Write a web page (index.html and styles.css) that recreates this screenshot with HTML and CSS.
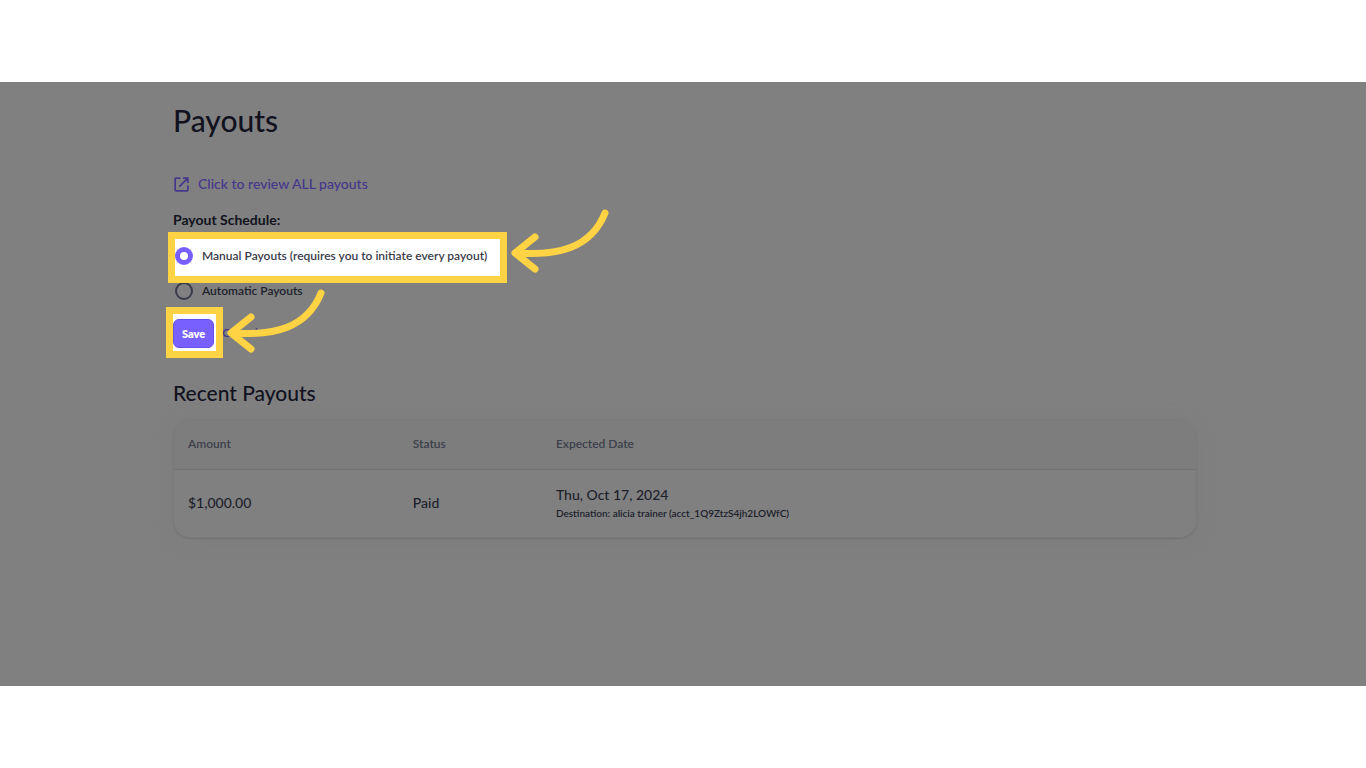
FILE: index.html
```html
<!DOCTYPE html>
<html lang="en">
<head>
<meta charset="utf-8">
<meta name="viewport" content="width=device-width, initial-scale=1">
<title>Payouts</title>
<link rel="stylesheet" href="styles.css">
</head>
<body>
<main class="stage">
  <div class="content">
    <h1 class="title">Payouts</h1>
    <a class="review-link" href="#all">
      <svg class="link-icon" viewBox="0 0 16 16" aria-hidden="true"><path d="M7 2H2.8A.8.8 0 0 0 2 2.800V13.200A.8.8 0 0 0 2.800 14H13.200A.8.8 0 0 0 14 13.200V9M9.500 2H14V6.500M14 2L6 10"/></svg>
      Click to review ALL payouts
    </a>
    <form class="schedule">
      <fieldset class="options">
        <legend class="legend">Payout Schedule:</legend>
        <div class="callout">
          <label class="option highlight"><input class="radio" type="radio" name="schedule" checked>Manual Payouts (requires you to initiate every payout)</label>
          <svg class="arrow" viewBox="0 0 100 68" aria-hidden="true"><path d="M96 8C82 43 49 51 8 48M26 32L6 48L26 64"/></svg>
        </div>
        <label class="option"><input class="radio" type="radio" name="schedule">Automatic Payouts</label>
      </fieldset>
      <div class="actions">
        <div class="callout">
          <div class="save-frame highlight"><button class="save" type="button">Save</button></div>
          <svg class="arrow arrow-low" viewBox="0 0 100 68" aria-hidden="true"><path d="M96 8C82 43 49 51 8 48M26 32L6 48L26 64"/></svg>
        </div>
        <a class="cancel" href="#cancel">Cancel</a>
      </div>
    </form>
    <h2 class="subtitle">Recent Payouts</h2>
    <div class="card">
      <table class="payouts">
        <thead>
          <tr><th class="col-amount">Amount</th><th class="col-status">Status</th><th>Expected Date</th></tr>
        </thead>
        <tbody>
          <tr>
            <td>$1,000.00</td>
            <td>Paid</td>
            <td>Thu, Oct 17, 2024<div class="destination">Destination: alicia trainer (acct_1Q9ZtzS4jh2LOWfC)</div></td>
          </tr>
        </tbody>
      </table>
    </div>
  </div>
</main>
</body>
</html>
```
FILE: styles.css
```css
* { box-sizing: border-box; }
body {
  margin: 0;
  min-height: 100vh;
  padding: 82px 0;
  display: flex;
  background: #fff;
  color: #1d1f2b;
  font: 500 13px/20px Lato, "Open Sans", sans-serif;
}
.stage { flex: 1; min-width: 0; background: #808080; }
.content {
  max-width: 1028px;
  margin: 0 auto;
  padding: 18px 0 20px 4px;
}
.title { margin: 0 0 34px; font-size: 30px; font-weight: 500; line-height: 40px; color: #11121d; }
.review-link {
  display: flex;
  width: fit-content;
  align-items: center;
  gap: 8px;
  margin-bottom: 16px;
  color: #45378c;
  font-size: 14px;
  text-decoration: none;
}
.link-icon { width: 17px; height: 17px; fill: none; stroke: currentColor; stroke-width: 1.6; }
.schedule { margin-bottom: 28px; }
.options { margin: 0; padding: 0; border: 0; min-width: 0; }
.legend { padding: 0; margin-bottom: 9px; color: #11121d; font-weight: 700; font-size: 14px; }
.callout { position: relative; width: fit-content; }
.highlight { background: #fff; box-shadow: 0 0 0 7px #ffd343; }
.option { display: flex; align-items: center; gap: 9px; width: fit-content; margin-left: 2px; font-size: 12px; font-weight: 600; }
.option.highlight { height: 37px; padding: 0 13px 3px 0; margin-bottom: 5px; color: #3a3c4a; }
.radio {
  appearance: none;
  width: 18px;
  height: 18px;
  margin: 0;
  border: 2px solid #393b4b;
  border-radius: 50%;
}
.radio:checked { border: 5px solid #7860ff; }
.arrow {
  position: absolute;
  z-index: 1;
  left: calc(100% + 9px);
  bottom: 3px;
  width: 100px;
  height: 68px;
  fill: none;
  stroke: #ffd343;
  stroke-width: 7;
  stroke-linecap: round;
  stroke-linejoin: round;
  pointer-events: none;
}
.arrow-low { bottom: -2px; }
.actions { display: flex; align-items: center; gap: 6px; margin-top: 13px; }
.save-frame { height: 37px; padding: 5px 2px 3px 0; }
.save {
  display: block;
  height: 29px;
  padding: 0 8px;
  border: 1px solid #684fe6;
  border-radius: 6px;
  background: #7860ff;
  color: #fff;
  font: 800 11px/16px Lato, sans-serif;
}
.cancel { color: #45378c; font-size: 12px; font-weight: 600; text-decoration: none; }
.subtitle { margin: 0 0 12px; font-size: 21px; font-weight: 500; line-height: 28px; color: #11121d; }
.card {
  overflow: hidden;
  border: 1px solid #7b7b7b;
  border-radius: 18px;
  box-shadow: 0 1px 1px #727272, 0 3px 16px #7d7d7d;
}
.payouts { width: 100%; border-collapse: collapse; table-layout: fixed; text-align: left; background: #808080; }
.col-amount { width: 22%; }
.col-status { width: 14%; }
.payouts th { height: 49px; padding: 0 14px; background: #7d7d7d; border-bottom: 1px solid #727272; color: #3c404b; font-size: 12px; font-weight: 600; }
.payouts td { height: 68px; padding: 0 14px; font-size: 14px; }
.destination { font-size: 10px; font-weight: 600; line-height: 17px; }
```
